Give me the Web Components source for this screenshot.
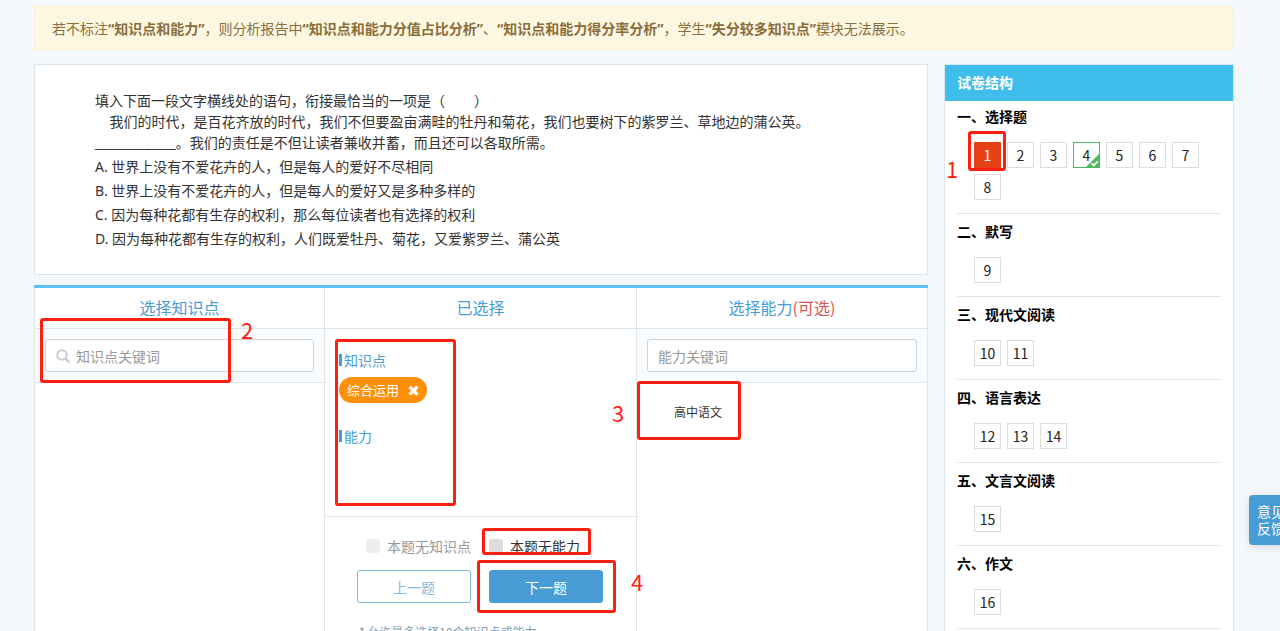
<!DOCTYPE html>
<html lang="zh-CN">
<head>
<meta charset="utf-8">
<title>标注知识点和能力</title>
<style>
  body {
    margin: 0;
    background: #f4f8fb;
    color: #333;
    font: 14px/20px "Noto Sans CJK SC", "Noto Sans", sans-serif;
  }
</style>
</head>
<body>
<label-page>
  <tip-banner slot="tip">若不标注<b>“知识点和能力”</b>，则分析报告中<b>“知识点和能力分值占比分析”</b>、<b>“知识点和能力得分率分析”</b>，学生<b>“失分较多知识点”</b>模块无法展示。</tip-banner>

  <question-card>
    <p>填入下面一段文字横线处的语句，衔接最恰当的一项是（&nbsp;&nbsp;&nbsp;&nbsp;&nbsp;&nbsp;&nbsp;&nbsp;）</p>
    <p>&nbsp;&nbsp;&nbsp;&nbsp;我们的时代，是百花齐放的时代，我们不但要盈亩满畦的牡丹和菊花，我们也要树下的紫罗兰、草地边的蒲公英。</p>
    <p>_____________。我们的责任是不但让读者兼收并蓄，而且还可以各取所需。</p>
    <p slot="options">A. 世界上没有不爱花卉的人，但是每人的爱好不尽相同</p>
    <p slot="options">B. 世界上没有不爱花卉的人，但是每人的爱好又是多种多样的</p>
    <p slot="options">C. 因为每种花都有生存的权利，那么每位读者也有选择的权利</p>
    <p slot="options">D. 因为每种花都有生存的权利，人们既爱牡丹、菊花，又爱紫罗兰、蒲公英</p>
  </question-card>

  <picker-panel>
    <picker-column>
      <span slot="title">选择知识点</span>
      <search-box placeholder="知识点关键词" icon></search-box>
    </picker-column>
    <picker-column>
      <span slot="title">已选择</span>
      <chosen-list>
        <chosen-group heading="知识点"><chosen-tag>综合运用</chosen-tag></chosen-group>
        <chosen-group heading="能力"></chosen-group>
      </chosen-list>
      <step-actions>* 允许最多选择10个知识点或能力</step-actions>
    </picker-column>
    <picker-column>
      <span slot="title">选择能力</span><span slot="optional">(可选)</span>
      <search-box placeholder="能力关键词"></search-box>
      <tree-node>高中语文</tree-node>
    </picker-column>
  </picker-panel>

  <paper-outline slot="side" heading="试卷结构">
    <paper-section heading="一、选择题" from="1" to="8" current="1" done="4"></paper-section>
    <paper-section heading="二、默写" from="9" to="9"></paper-section>
    <paper-section heading="三、现代文阅读" from="10" to="11"></paper-section>
    <paper-section heading="四、语言表达" from="12" to="14"></paper-section>
    <paper-section heading="五、文言文阅读" from="15" to="15"></paper-section>
    <paper-section heading="六、作文" from="16" to="16"></paper-section>
  </paper-outline>

  <feedback-tab slot="over"></feedback-tab>
  <mark-box slot="over" box="968 131 38 40"></mark-box>
  <mark-box slot="over" box="40 318 191 65"></mark-box>
  <mark-box slot="over" box="335 339 121 167"></mark-box>
  <mark-box slot="over" box="637 381 104 59"></mark-box>
  <mark-box slot="over" box="482 528 109 27"></mark-box>
  <mark-box slot="over" box="477 560 139 53"></mark-box>
  <mark-number slot="over" at="946 156">1</mark-number>
  <mark-number slot="over" at="241 317">2</mark-number>
  <mark-number slot="over" at="612 400">3</mark-number>
  <mark-number slot="over" at="631 569">4</mark-number>
</label-page>

<script>
  class BaseElement extends HTMLElement {
    constructor() {
      super();
      this.attachShadow({ mode: 'open' });
    }

    connectedCallback() {
      this.shadowRoot.innerHTML = this.template();
    }
  }

  class LabelPage extends BaseElement {
    template() {
      return `
        <style>
          :host {
            display: block;
            position: relative;
            height: 100vh;
            overflow: hidden;
            box-sizing: border-box;
            padding: 6px 46px 0 34px;
          }
          .layout {
            display: grid;
            grid-template-columns: minmax(0, 1fr) 290px;
            gap: 16px;
            margin-top: 14px;
          }
          main {
            display: flex;
            flex-direction: column;
            gap: 10px;
          }
        </style>
        <slot name="tip"></slot>
        <div class="layout">
          <main><slot></slot></main>
          <slot name="side"></slot>
        </div>
        <slot name="over"></slot>
      `;
    }
  }

  class TipBanner extends BaseElement {
    template() {
      return `
        <style>
          :host {
            display: block;
            padding: 12px 17px 10px;
            border: 1px solid #faf0cd;
            border-radius: 3px;
            background: #fdf7e2;
            color: #8a6d3b;
            font-family: "Noto Sans", "Noto Sans CJK SC", sans-serif;
          }
        </style>
        <slot></slot>
      `;
    }
  }

  class QuestionCard extends BaseElement {
    template() {
      return `
        <style>
          :host {
            display: block;
            padding: 25px 60px 23px;
            border: 1px solid #dde6ed;
            background: #fff;
            font-family: "Noto Sans", "Noto Sans CJK SC", sans-serif;
          }
          .options {
            margin-top: 2px;
          }
          ::slotted(p) {
            margin: 0;
            line-height: 21px;
          }
          ::slotted(p[slot="options"]) {
            line-height: 24px;
          }
        </style>
        <slot></slot>
        <div class="options"><slot name="options"></slot></div>
      `;
    }
  }

  class PickerPanel extends BaseElement {
    template() {
      return `
        <style>
          :host {
            display: grid;
            grid-template-columns: 290px minmax(0, 1fr) 292px;
            flex: 1;
            border-top: 3px solid #5bc0ff;
            background: #fff;
          }
          ::slotted(:last-child) {
            border-right: 1px solid #dde6ed;
          }
        </style>
        <slot></slot>
      `;
    }
  }

  class PickerColumn extends BaseElement {
    template() {
      return `
        <style>
          :host {
            display: block;
            border-left: 1px solid #dde6ed;
          }
          h2 {
            margin: 0;
            padding-bottom: 2px;
            border-bottom: 1px solid #dde6ed;
            color: #489cd6;
            font-size: 16px;
            font-weight: normal;
            line-height: 38px;
            text-align: center;
          }
          ::slotted([slot="optional"]) {
            color: #d9534f;
          }
        </style>
        <h2><slot name="title"></slot><slot name="optional"></slot></h2>
        <slot></slot>
      `;
    }
  }

  class SearchBox extends BaseElement {
    template() {
      const text = this.getAttribute('placeholder');
      const icon = this.hasAttribute('icon')
        ? `<svg width="14" height="14" viewBox="0 0 14 14" fill="none" stroke="#ccc" stroke-width="2">
             <circle cx="6" cy="6" r="4.8"/><path d="M9.6 9.6l3 3" stroke-width="2.6" stroke-linecap="round"/>
           </svg>`
        : '';
      return `
        <style>
          :host {
            display: block;
            padding: 10px;
            border-bottom: 1px solid #dde6ed;
            background: #f9fcfe;
          }
          label {
            display: flex;
            align-items: center;
            gap: 6px;
            height: 33px;
            box-sizing: border-box;
            padding: 0 10px;
            border: 1px solid #ccd3d9;
            border-radius: 3px;
            background: #fff;
          }
          input {
            flex: 1;
            min-width: 0;
            padding: 0;
            border: 0;
            outline: 0;
            background: none;
            font: inherit;
          }
          input::placeholder {
            color: #999;
          }
        </style>
        <label>${icon}<input type="text" placeholder="${text}" aria-label="${text}"></label>
      `;
    }
  }

  class ChosenList extends BaseElement {
    template() {
      return `
        <style>
          :host {
            display: flex;
            flex-direction: column;
            gap: 23px;
            min-height: 188px;
            box-sizing: border-box;
            padding: 21px 14px;
            border-bottom: 1px solid #dde6ed;
          }
        </style>
        <slot></slot>
      `;
    }
  }

  class ChosenGroup extends BaseElement {
    template() {
      return `
        <style>
          :host {
            display: flex;
            flex-direction: column;
            align-items: flex-start;
            gap: 7px;
          }
          h3 {
            display: flex;
            align-items: center;
            gap: 2px;
            margin: 0;
            color: #489cd6;
            font-size: 14px;
            font-weight: normal;
          }
          h3::before {
            content: "";
            width: 3px;
            height: 12px;
            background: #489cd6;
          }
        </style>
        <h3>${this.getAttribute('heading')}</h3>
        <slot></slot>
      `;
    }
  }

  class ChosenTag extends BaseElement {
    template() {
      return `
        <style>
          :host {
            display: flex;
            align-items: center;
            gap: 9px;
            height: 26px;
            padding: 0 8px;
            border-radius: 13px;
            background: #ff9008;
            color: #fff;
            font-size: 13px;
          }
          button {
            display: flex;
            padding: 0;
            border: 0;
            background: none;
          }
        </style>
        <slot></slot>
        <button type="button" aria-label="删除">
          <svg width="11" height="11" viewBox="0 0 11 11" stroke="#fff" stroke-width="3.4">
            <path d="M1.6 1.8l7.8 7.8M9.4 1.8l-7.8 7.8"/>
          </svg>
        </button>
      `;
    }
  }

  class StepActions extends BaseElement {
    template() {
      return `
        <style>
          :host {
            display: grid;
            grid-template-columns: 114px 114px;
            gap: 14px 18px;
            padding: 19px 32px 60px;
          }
          label {
            display: flex;
            align-items: center;
            gap: 7px;
          }
          label.off {
            justify-self: end;
            color: #999;
          }
          input {
            appearance: none;
            width: 14px;
            height: 14px;
            margin: 0;
            border-radius: 3px;
            background: #ddd;
          }
          .off input {
            background: #eee;
          }
          button {
            height: 33px;
            padding: 0;
            border: 1px solid #7fbde6;
            border-radius: 3px;
            background: #fff;
            color: #84bbe1;
            font: inherit;
          }
          button.next {
            border-color: #489cd6;
            background: #489cd6;
            color: #fff;
          }
          p {
            grid-column: 1 / -1;
            margin: 6px 0 0 2px;
            color: #7d9db5;
            font-size: 12px;
            line-height: 18px;
          }
        </style>
        <label class="off"><input type="checkbox" disabled>本题无知识点</label>
        <label><input type="checkbox">本题无能力</label>
        <button type="button">上一题</button>
        <button type="button" class="next">下一题</button>
        <p><slot></slot></p>
      `;
    }
  }

  class TreeNode extends BaseElement {
    template() {
      return `
        <style>
          :host {
            display: block;
            padding: 19px 37px;
            font-size: 12px;
          }
        </style>
        <slot></slot>
      `;
    }
  }

  class PaperOutline extends BaseElement {
    template() {
      return `
        <style>
          :host {
            display: block;
            padding-bottom: 40px;
            border: 1px solid #dde6ed;
            background: #fff;
          }
          h2 {
            margin: 0;
            padding: 0 12px 2px;
            background: #3fbeec;
            color: #fff;
            font-size: 14px;
            line-height: 34px;
          }
          ::slotted(:not(:first-child)) {
            margin-top: 2px;
          }
        </style>
        <h2>${this.getAttribute('heading')}</h2>
        <slot></slot>
      `;
    }
  }

  class PaperSection extends BaseElement {
    template() {
      const current = this.getAttribute('current');
      const done = this.getAttribute('done');
      let items = '';
      for (let n = Number(this.getAttribute('from')); n <= Number(this.getAttribute('to')); n++) {
        if (String(n) === current) {
          items += `<button type="button" class="current">${n}</button>`;
        } else if (String(n) === done) {
          items += `<button type="button" class="done">${n}<svg width="15" height="15" viewBox="0 0 15 15">
            <path d="M15 0v15H0z" fill="#4fb85c"/>
            <path d="M6.6 10.2l2.2 2.2 4-4" fill="none" stroke="#fff" stroke-width="2"/>
          </svg></button>`;
        } else {
          items += `<button type="button">${n}</button>`;
        }
      }
      return `
        <style>
          :host {
            display: block;
            margin: 0 12px;
            padding: 2px 0 13px;
            border-bottom: 1px solid #e2e2e2;
          }
          h3 {
            margin: 0 0 13px;
            color: #000;
            font-size: 14px;
            line-height: 26px;
          }
          div {
            display: flex;
            flex-wrap: wrap;
            gap: 6px;
            padding-left: 17px;
          }
          button {
            position: relative;
            width: 27px;
            height: 26px;
            padding: 0;
            border: 1px solid #ddd;
            background: #fff;
            color: #222;
            font: inherit;
          }
          .current {
            border-color: #e64216;
            background: #e64216;
            color: #fff;
          }
          .done {
            border-color: #4fb85c;
          }
          svg {
            position: absolute;
            right: -1px;
            bottom: -1px;
          }
        </style>
        <h3>${this.getAttribute('heading')}</h3>
        <div>${items}</div>
      `;
    }
  }

  class FeedbackTab extends BaseElement {
    template() {
      return `
        <style>
          :host {
            position: absolute;
            top: 495px;
            right: -13px;
          }
          button {
            width: 44px;
            height: 50px;
            padding: 0 8px;
            border: 0;
            border-radius: 4px;
            background: #489cd6;
            box-shadow: 0 2px 8px rgba(0, 0, 0, .12);
            color: #fff;
            font: inherit;
            line-height: 17px;
          }
        </style>
        <button type="button">意见反馈</button>
      `;
    }
  }

  // box="left top width height"
  class MarkBox extends BaseElement {
    template() {
      const [left, top, width, height] = this.getAttribute('box').split(' ');
      return `
        <style>
          :host {
            position: absolute;
            left: ${left}px;
            top: ${top}px;
            width: ${width}px;
            height: ${height}px;
            box-sizing: border-box;
            border: 3px solid #ff1e10;
            border-radius: 3px;
            pointer-events: none;
          }
        </style>
      `;
    }
  }

  // at="left top"
  class MarkNumber extends BaseElement {
    template() {
      const [left, top] = this.getAttribute('at').split(' ');
      return `
        <style>
          :host {
            position: absolute;
            left: ${left}px;
            top: ${top}px;
            color: #ff1e10;
            font-size: 22px;
            line-height: 24px;
          }
        </style>
        <slot></slot>
      `;
    }
  }

  customElements.define('label-page', LabelPage);
  customElements.define('tip-banner', TipBanner);
  customElements.define('question-card', QuestionCard);
  customElements.define('picker-panel', PickerPanel);
  customElements.define('picker-column', PickerColumn);
  customElements.define('search-box', SearchBox);
  customElements.define('chosen-list', ChosenList);
  customElements.define('chosen-group', ChosenGroup);
  customElements.define('chosen-tag', ChosenTag);
  customElements.define('step-actions', StepActions);
  customElements.define('tree-node', TreeNode);
  customElements.define('paper-outline', PaperOutline);
  customElements.define('paper-section', PaperSection);
  customElements.define('feedback-tab', FeedbackTab);
  customElements.define('mark-box', MarkBox);
  customElements.define('mark-number', MarkNumber);
</script>
</body>
</html>
